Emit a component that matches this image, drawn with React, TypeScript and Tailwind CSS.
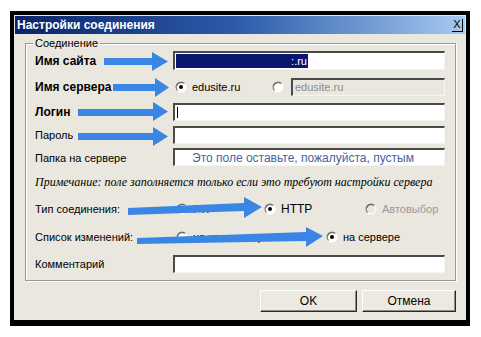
import React, { useId } from "react";

const ui = { fontFamily: '"Liberation Sans", Arial, sans-serif' };
const serif = { fontFamily: '"Liberation Serif", "Times New Roman", serif' };

const Radio = ({ checked = false, disabled = false }: { checked?: boolean; disabled?: boolean }) => {
  const id = useId();
  return (
    <svg width={12} height={12} viewBox="0 0 12 12" className="shrink-0">
      <defs>
        <linearGradient id={id} x1="0" y1="0" x2="1" y2="1">
          <stop offset="0.45" stopColor="#7a7a7a" />
          <stop offset="0.55" stopColor="#ffffff" />
        </linearGradient>
      </defs>
      <circle cx={6} cy={6} r={5.5} fill={`url(#${id})`} />
      <circle cx={6} cy={6} r={4.3} fill={disabled ? "#e9e7de" : "#ffffff"} stroke="#3a3a3a" strokeWidth={0.6} strokeDasharray="8 20" strokeDashoffset={-14} />
      {checked && <circle cx={6} cy={6} r={2} fill="#000" />}
    </svg>
  );
};

const Field = ({ children, className = "" }: { children?: React.ReactNode; className?: string }) => (
  <div
    className={`h-full w-[272px] border-t-2 border-l-2 border-r border-b border-t-[#4a4a4a] border-l-[#4a4a4a] border-r-[#f4f4f0] border-b-[#f4f4f0] flex items-center ${className}`}
  >
    {children}
  </div>
);

const Label = ({ children, bold = false }: { children: React.ReactNode; bold?: boolean }) => (
  <div className={`w-[138px] shrink-0 ${bold ? "text-[12px] font-bold" : "text-[11px]"} text-black`}>{children}</div>
);

export default function App() {
  return (
    <div className="relative w-[481px] h-[337px] bg-white overflow-hidden" style={ui}>
      <div className="pt-[11px] pl-[10px]">
        <div className="w-[460px] h-[315px] border-t-4 border-l-4 border-r-4 border-b-[6px] border-black bg-[#e9e7de] p-[1px] flex flex-col">
          {/* title bar */}
          <div className="h-[18px] bg-gradient-to-r from-[#0a246a] via-[#2f5cab] to-[#a6caf0] flex items-center justify-between pl-[2px] pr-[2px]">
            <span className="text-white text-[12px] font-bold leading-none">Настройки соединения</span>
            <div className="w-[11px] h-[13px] border-r border-b border-black flex items-center justify-center text-[11px] leading-none text-black">
              X
            </div>
          </div>

          <div className="pl-[10px] pr-[9px]">
            {/* group box */}
            <div className="relative mt-[9px] h-[238px] border border-[#9c9a90] shadow-[inset_1px_1px_0_#ffffff,1px_1px_0_#ffffff] pl-[9px] flex flex-col">
              <span className="absolute -top-[8px] left-[7px] px-[2px] bg-[#e9e7de] text-[11px] leading-[14px]">Соединение</span>

              <div className="mt-[7px] h-[19px] flex items-center">
                <Label bold>Имя сайта</Label>
                <Field className="bg-white pl-[1px]">
                  <div className="h-[14px] w-[132px] bg-[#0a1670] flex items-center justify-end pr-[1px] text-white text-[11px] leading-none">
                    :.ru
                  </div>
                </Field>
              </div>

              <div className="mt-[8px] h-[18px] flex items-center">
                <Label bold>Имя сервера</Label>
                <div className="flex items-center h-full">
                  <div className="flex items-center gap-[5px] w-[99px] pl-[2px]">
                    <Radio checked />
                    <span className="text-[11px]">edusite.ru</span>
                  </div>
                  <Radio />
                  <div className="ml-[7px] h-full w-[154px] border-t-2 border-l-2 border-r border-b border-t-[#4a4a4a] border-l-[#4a4a4a] border-r-[#f4f4f0] border-b-[#f4f4f0] flex items-center pl-[2px] text-[11px] text-[#8c8c8c]">
                    edusite.ru
                  </div>
                </div>
              </div>

              <div className="mt-[7px] h-[18px] flex items-center">
                <Label bold>Логин</Label>
                <Field className="bg-white pl-[2px]">
                  <div className="w-[1px] h-[11px] bg-black" />
                </Field>
              </div>

              <div className="mt-[5px] h-[18px] flex items-center">
                <Label>Пароль</Label>
                <Field className="bg-white" />
              </div>

              <div className="mt-[4px] h-[18px] flex items-end">
                <Label>Папка на сервере</Label>
                <Field className="bg-white pl-[17px]">
                  <span className="text-[12px] text-[#46639f] whitespace-nowrap">Это поле оставьте, пожалуйста, пустым</span>
                </Field>
              </div>

              <div className="mt-[8px] h-[16px] flex items-center text-[12px] italic whitespace-nowrap" style={serif}>
                Примечание: поле заполняется только если это требуют настройки сервера
              </div>

              <div className="mt-[10px] h-[18px] flex items-center">
                <Label>Тип соединения:</Label>
                <div className="flex items-center pl-[3px]">
                  <div className="flex items-center gap-[5px] w-[88px]">
                    <Radio />
                    <span className="text-[11px]">FTP</span>
                  </div>
                  <div className="flex items-center gap-[5px] w-[101px]">
                    <Radio checked />
                    <span className="text-[12px]">HTTP</span>
                  </div>
                  <div className="flex items-center gap-[5px]">
                    <Radio disabled />
                    <span className="text-[11px] text-[#9a9a9a]">Автовыбор</span>
                  </div>
                </div>
              </div>

              <div className="mt-[10px] h-[18px] flex items-center">
                <Label>Список изменений:</Label>
                <div className="flex items-center pl-[3px]">
                  <div className="flex items-center gap-[5px] w-[150px]">
                    <Radio />
                    <span className="text-[11px]">на компьютере</span>
                  </div>
                  <div className="flex items-center gap-[5px]">
                    <Radio checked />
                    <span className="text-[11px]">на сервере</span>
                  </div>
                </div>
              </div>

              <div className="mt-[9px] h-[18px] flex items-center">
                <Label>Комментарий</Label>
                <Field className="bg-white" />
              </div>
            </div>

            {/* buttons */}
            <div className="mt-[9px] flex justify-end gap-[5px]">
              <button className="w-[97px] h-[22px] bg-[#ece9e0] border border-t-white border-l-white border-r-[#2a2a2a] border-b-[#2a2a2a] shadow-[inset_-1px_-1px_0_#8a8a8a] text-[12px] text-black">
                OK
              </button>
              <button className="w-[94px] h-[22px] bg-[#ece9e0] border border-t-white border-l-white border-r-[#2a2a2a] border-b-[#2a2a2a] shadow-[inset_-1px_-1px_0_#8a8a8a] text-[12px] text-black">
                Отмена
              </button>
            </div>
          </div>
        </div>
      </div>

      {/* annotation arrows */}
      <svg className="absolute inset-0 pointer-events-none" width={481} height={337} viewBox="0 0 481 337">
        <g fill="#3b85e4">
          <polygon points="104,58 152,58 152,52 168,61.5 152,71 152,65 104,65" />
          <polygon points="113,84 155,84 155,78 169,87.5 155,97 155,91 113,91" />
          <polygon points="78,109 153,109 153,102 168,111.5 153,121 153,116 78,116" />
          <polygon points="78,133 153,133 153,127 168,136.5 153,146 153,140 78,140" />
          <polygon points="128,208 244,203 244,197 262,207 244,218 244,211 128,215" />
          <polygon points="137,238 306,232 306,227 323,236 306,247 306,241 137,244" />
        </g>
      </svg>
    </div>
  );
}
